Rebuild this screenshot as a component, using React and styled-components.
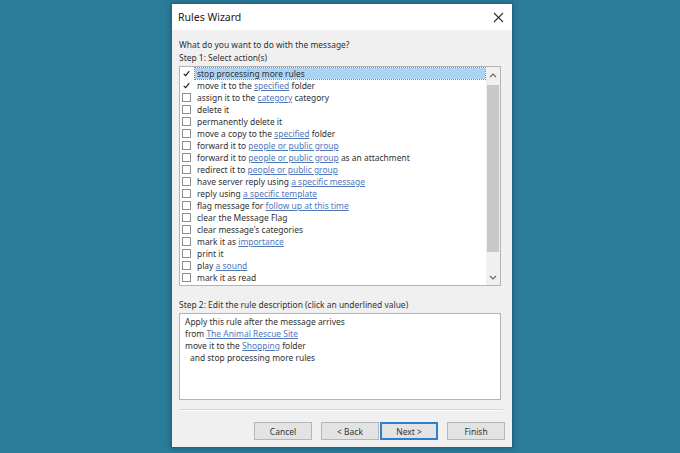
import React from "react";
import styled, { createGlobalStyle } from "styled-components";

const GlobalStyle = createGlobalStyle`
    html, body {
        margin: 0;
        padding: 0;
        background: #2b7b9b;
        height: 100%;
        overflow: hidden;
    }
    body {
        font-family: "Noto Sans", "Open Sans", sans-serif;
        color: #303030;
    }
`;

const Page = styled.div`
    width: 680px;
    height: 453px;
    padding: 3px 0 0 171px;
    box-sizing: border-box;
`;

const Dialog = styled.div`
    width: 342px;
    height: 445px;
    background: #f0f0f0;
    border: 1px solid #1f6482;
    box-sizing: border-box;
    box-shadow: 0 0 6px rgba(0, 0, 0, 0.25);
    display: flex;
    flex-direction: column;
`;

const TitleBar = styled.div`
    height: 26px;
    background: #ffffff;
    display: flex;
    align-items: center;
    justify-content: space-between;
    padding: 0 8px 0 6px;
    font-size: 10.5px;
    color: #1a1a1a;
`;

const Body = styled.div`
    padding: 8px 10px 0 7px;
    display: flex;
    flex-direction: column;
    font-size: 8.45px;
    flex: 1;
`;

const Label = styled.div`
    height: 13px;
    line-height: 13px;
    white-space: nowrap;
`;

const ListBox = styled.div`
    margin-top: 2px;
    height: 220px;
    width: 322px;
    box-sizing: border-box;
    border: 1px solid #b4b4b4;
    background: #fff;
    display: flex;
`;

const Rows = styled.div`
    flex: 1;
`;

const Row = styled.div`
    height: 12.06px;
    display: flex;
    align-items: center;
    padding-left: 2px;
    white-space: nowrap;
`;

const Box = styled.span`
    width: 9px;
    height: 9px;
    box-sizing: border-box;
    border: 1px solid ${(p) => (p.checked ? "transparent" : "#8e8e8e")};
    background: #fff;
    margin-right: 4px;
    display: flex;
    align-items: center;
    justify-content: center;
    flex-shrink: 0;
`;

const RowText = styled.span`
    padding: 0 2px;
    line-height: 11px;
    background: ${(p) => (p.selected ? "#acd3f3" : "transparent")};
    outline: ${(p) => (p.selected ? "1px dotted #6b8db0" : "none")};
    flex: ${(p) => (p.selected ? 1 : "none")};
    margin-right: ${(p) => (p.selected ? "1px" : 0)};
`;

const Link = styled.span`
    color: #4f78bc;
    text-decoration: underline;
`;

const Scrollbar = styled.div`
    width: 14px;
    background: #f0f0f0;
    display: flex;
    flex-direction: column;
    align-items: center;
`;

const Arrow = styled.div`
    height: 16px;
    display: flex;
    align-items: center;
    justify-content: center;
`;

const Thumb = styled.div`
    width: 12px;
    height: 167px;
    background: #c8c8c8;
    margin-top: 2px;
`;

const Track = styled.div`
    flex: 1;
`;

const Step2 = styled(Label)`
    margin-top: 12px;
`;

const Description = styled.div`
    margin-top: 2px;
    height: 87px;
    width: 322px;
    box-sizing: border-box;
    border: 1px solid #b4b4b4;
    background: #fff;
    padding: 2px 5px;
`;

const DescLine = styled.div`
    height: 12px;
    line-height: 12px;
    white-space: nowrap;
    padding-left: ${(p) => (p.indent ? "5px" : 0)};
`;

const Separator = styled.div`
    margin-top: 9px;
    height: 1px;
    width: 324px;
    background: #d6d6d6;
    border-bottom: 1px solid #fbfbfb;
`;

const Buttons = styled.div`
    margin-top: 11px;
    display: flex;
    justify-content: flex-end;
    gap: 9px;
    width: 326px;
`;

const Pair = styled.div`
    display: flex;
    gap: 1px;
`;

const Button = styled.div`
    width: 58px;
    height: 18px;
    box-sizing: border-box;
    border: ${(p) => (p.primary ? "2px solid #2f7fd0" : "1px solid #b6b6b6")};
    background: #e3e3e3;
    display: flex;
    align-items: center;
    justify-content: center;
    font-size: 8.45px;
    color: #333;
`;

const Check = () => (
    <svg width="10" height="9" viewBox="0 0 10 9">
        <path d="M1 5 L3.8 7.6 L9 1.2" fill="none" stroke="#1a1a1a" strokeWidth="1.6" />
    </svg>
);

const actions = [
    { checked: true, selected: true, parts: ["stop processing more rules"] },
    { checked: true, parts: ["move it to the ", ["specified"], " folder"] },
    { parts: ["assign it to the ", ["category"], " category"] },
    { parts: ["delete it"] },
    { parts: ["permanently delete it"] },
    { parts: ["move a copy to the ", ["specified"], " folder"] },
    { parts: ["forward it to ", ["people or public group"]] },
    { parts: ["forward it to ", ["people or public group"], " as an attachment"] },
    { parts: ["redirect it to ", ["people or public group"]] },
    { parts: ["have server reply using ", ["a specific message"]] },
    { parts: ["reply using ", ["a specific template"]] },
    { parts: ["flag message for ", ["follow up at this time"]] },
    { parts: ["clear the Message Flag"] },
    { parts: ["clear message's categories"] },
    { parts: ["mark it as ", ["importance"]] },
    { parts: ["print it"] },
    { parts: ["play ", ["a sound"]] },
    { parts: ["mark it as read"] },
];

const renderParts = (parts) =>
    parts.map((p, i) =>
        Array.isArray(p) ? <Link key={i}>{p[0]}</Link> : <React.Fragment key={i}>{p}</React.Fragment>
    );

export default function App() {
    return (
        <Page>
            <GlobalStyle />
            <Dialog>
                <TitleBar>
                    <span>Rules Wizard</span>
                    <svg width="11" height="11" viewBox="0 0 11 11">
                        <path d="M1 1 L10 10 M10 1 L1 10" stroke="#333" strokeWidth="1.1" />
                    </svg>
                </TitleBar>
                <Body>
                    <Label>What do you want to do with the message?</Label>
                    <Label>Step 1: Select action(s)</Label>
                    <ListBox>
                        <Rows>
                            {actions.map((a, i) => (
                                <Row key={i}>
                                    <Box checked={a.checked}>{a.checked && <Check />}</Box>
                                    <RowText selected={a.selected}>{renderParts(a.parts)}</RowText>
                                </Row>
                            ))}
                        </Rows>
                        <Scrollbar>
                            <Arrow>
                                <svg width="8" height="5" viewBox="0 0 8 5">
                                    <path d="M1 4 L4 1 L7 4" fill="none" stroke="#666" strokeWidth="1.1" />
                                </svg>
                            </Arrow>
                            <Thumb />
                            <Track />
                            <Arrow>
                                <svg width="8" height="5" viewBox="0 0 8 5">
                                    <path d="M1 1 L4 4 L7 1" fill="none" stroke="#666" strokeWidth="1.1" />
                                </svg>
                            </Arrow>
                        </Scrollbar>
                    </ListBox>
                    <Step2>Step 2: Edit the rule description (click an underlined value)</Step2>
                    <Description>
                        <DescLine>Apply this rule after the message arrives</DescLine>
                        <DescLine>
                            from <Link>The Animal Rescue Site</Link>
                        </DescLine>
                        <DescLine>
                            move it to the <Link>Shopping</Link> folder
                        </DescLine>
                        <DescLine indent>and stop processing more rules</DescLine>
                    </Description>
                    <Separator />
                    <Buttons>
                        <Button>Cancel</Button>
                        <Pair>
                            <Button>&lt; Back</Button>
                            <Button primary>Next &gt;</Button>
                        </Pair>
                        <Button>Finish</Button>
                    </Buttons>
                </Body>
            </Dialog>
        </Page>
    );
}
